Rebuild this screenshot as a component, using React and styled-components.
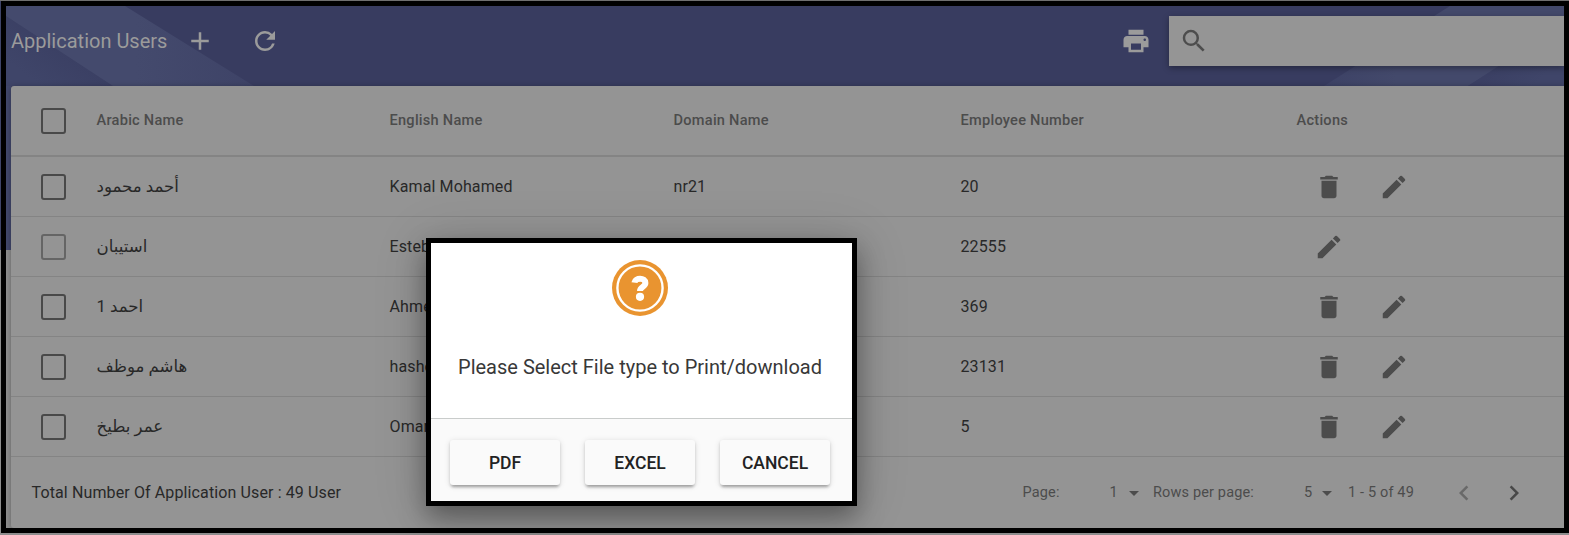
import React from "react";
import styled, { createGlobalStyle, css } from "styled-components";
import {
  MdAdd, MdRefresh, MdPrint, MdSearch, MdDelete, MdEdit,
  MdChevronLeft, MdChevronRight, MdArrowDropDown,
} from "react-icons/md";

const Global = createGlobalStyle`
  * { box-sizing: border-box; }
  body { margin: 0; background: #939393; font-family: Roboto, "Liberation Sans", sans-serif; }
`;
const Page = styled.div`
  position: relative;
  width: 1569px;
  height: 535px;
  overflow: hidden;
  padding: 1px 0 2px 1px;
  background: linear-gradient(#6f6f6f, #6f6f6f) 0 0 / 100% 1px no-repeat, linear-gradient(#3f4468, #3f4468) 0 0 / 1px 250px no-repeat, #8d8d8d;
`;
const Frame = styled.div`
  position: relative;
  display: flex;
  flex-direction: column;
  height: 532px;
  border: 5px solid #000;
  overflow: hidden;
  background: linear-gradient(#383c60 244px, #8d8d8d 244px);
`;
const Backdrop = styled.svg`
  position: absolute;
  top: 0;
  left: 0;
`;
const Toolbar = styled.header`
  position: relative;
  display: flex;
  align-items: center;
  height: 80px;
  padding: 0 0 10px 5px;
  color: #9b9b9b;
`;
const Title = styled.h1`
  margin: 0;
  width: 174px;
  font-size: 20px;
  font-weight: 400;
  white-space: nowrap;
`;
const IconButton = styled.button`
  display: grid;
  place-items: center;
  width: 30px;
  height: 30px;
  padding: 0;
  border: 0;
  background: none;
  color: ${(p) => p.$color || "inherit"};
  margin-left: ${(p) => p.$gap || 0}px;
  svg { width: 30px; height: 30px; display: block; }
`;
const Search = styled.div`
  display: flex;
  align-items: center;
  width: 395px;
  height: 50px;
  margin-left: 18px;
  padding-left: 10px;
  background: #959595;
  color: #4d4d4d;
  box-shadow: 0 2px 6px rgba(0, 0, 0, 0.35);
  svg { width: 30px; height: 30px; }
`;
const Card = styled.main`
  position: relative;
  margin-left: 5px;
  height: 442px;
  border-radius: 3px 0 0 3px;
  background: #949494;
  color: #282828;
  box-shadow: 0 1px 6px rgba(0, 0, 0, 0.3);
`;
const Row = styled.div`
  display: grid;
  grid-template-columns: 85.5px 293px 284px 287px 336px 1fr;
  align-items: center;
  height: 60px;
  border-bottom: 1px solid #848484;
  font-size: 16px;
  letter-spacing: 0.12px;
  ${(p) => p.$head && css`
    height: 71px;
    padding-bottom: 1px;
    border-bottom: 2px solid #848484;
    color: #4c4c4c;
    font-size: 14.6px;
    font-weight: 500;
    letter-spacing: 0.25px;
  `}
`;
const Check = styled.span`
  width: 25px;
  height: 26px;
  margin: 1px 0 0 30px;
  border: 2px solid ${(p) => (p.$off ? "#656565" : "#494949")};
  border-radius: 3px;
`;
const Arabic = styled.span`
  justify-self: start;
  font-family: Roboto, "DejaVu Sans", sans-serif;
  font-size: 16.6px;
  line-height: 24px;
  letter-spacing: 0;
`;
const Actions = styled.div`
  display: flex;
  gap: 35px;
  padding-left: 17.5px;
  color: #4c4c4c;
`;
const Footer = styled.footer`
  display: flex;
  align-items: center;
  height: 71px;
  padding-left: 20.5px;
`;
const Total = styled.div`
  width: 991px;
  font-size: 16px;
  letter-spacing: 0.12px;
`;
const Label = styled.span`
  width: ${(p) => p.$w}px;
  font-size: 14.5px;
  letter-spacing: 0.15px;
  color: #4c4c4c;
  white-space: nowrap;
`;
const Caret = styled(MdArrowDropDown)`
  flex: none;
  width: 24px;
  height: 24px;
  color: #4c4c4c;
  margin-right: ${(p) => p.$after}px;
`;
const Dialog = styled.div`
  position: absolute;
  left: 426px;
  top: 238px;
  width: 431px;
  height: 268px;
  display: flex;
  flex-direction: column;
  border: 5px solid #000;
  background: #fff;
  box-shadow: 0 12px 25px rgba(0, 0, 0, 0.35), 0 4px 50px rgba(0, 0, 0, 0.15);
`;
const DialogBody = styled.div`
  display: flex;
  flex-direction: column;
  align-items: center;
  height: 175px;
  padding: 17px 3px 0 0;
`;
const Message = styled.p`
  margin: 37px 0 0;
  font-size: 20px;
  line-height: 24px;
  color: #383838;
  white-space: nowrap;
`;
const DialogFooter = styled.div`
  flex: 1;
  display: flex;
  gap: 25px;
  padding: 21px 0 0 19px;
  border-top: 1px solid #c9cccb;
  background: #fafafa;
`;
const Choice = styled.button`
  width: 110px;
  height: 45px;
  padding: 0;
  border: 0;
  border-radius: 3px;
  background: #fafafa;
  color: #222;
  font: 500 17.5px Roboto, sans-serif;
  box-shadow: 0 4px 3px -2px rgba(0, 0, 0, 0.2), 0 2px 3px rgba(0, 0, 0, 0.14), 0 1px 6px rgba(0, 0, 0, 0.12);
`;

const users = [
  ["أحمد محمود", "Kamal Mohamed", "nr21", "20"],
  ["استيبان", "Esteban", "", "22555"],
  ["احمد 1", "Ahmed", "", "369"],
  ["هاشم موظف", "hashem", "", "23131"],
  ["عمر بطيخ", "Omar", "", "5"],
];

export default function App() {
  return (
    <Page>
      <Global />
      <Frame>
        <Backdrop width="1558" height="244" aria-hidden="true">
          <defs>
            <linearGradient id="fold" gradientUnits="userSpaceOnUse" x1="60" y1="46" x2="35" y2="80">
              <stop offset="0" stopColor="#3b4064" />
              <stop offset="1" stopColor="#3f4569" />
            </linearGradient>
            <linearGradient id="band" gradientUnits="userSpaceOnUse" x1="130" y1="80" x2="250" y2="80">
              <stop offset="0" stopColor="#444a6d" />
              <stop offset="1" stopColor="#3e4367" />
            </linearGradient>
            <linearGradient id="bandRight" gradientUnits="userSpaceOnUse" x1="1318" y1="80" x2="1390" y2="80">
              <stop offset="0" stopColor="#3d4266" />
              <stop offset="1" stopColor="#43496b" />
            </linearGradient>
            <linearGradient id="foldRight" gradientUnits="userSpaceOnUse" x1="1490" y1="62" x2="1515" y2="90">
              <stop offset="0" stopColor="#3b4064" />
              <stop offset="1" stopColor="#3f4569" />
            </linearGradient>
          </defs>
          <path d="M0 10 107 80H0Z" fill="url(#fold)" />
          <path d="M0 0H119L248 80H107L0 10Z" fill="url(#band)" />
          <path d="M1444 0H1558V20L1462 80H1318Z" fill="url(#bandRight)" />
          <path d="M1558 17V80H1462Z" fill="url(#foldRight)" />
          <path d="M0 80H5V244H0Z" fill="#42486c" />
        </Backdrop>
        <Toolbar>
          <Title>Application Users</Title>
          <IconButton aria-label="Add"><MdAdd /></IconButton>
          <IconButton aria-label="Refresh" $gap={35}><MdRefresh /></IconButton>
          <IconButton aria-label="Print" $gap={841}><MdPrint /></IconButton>
          <Search><MdSearch /></Search>
        </Toolbar>
        <Card>
          <Row $head>
            <Check />
            <span>Arabic Name</span>
            <span>English Name</span>
            <span>Domain Name</span>
            <span>Employee Number</span>
            <span>Actions</span>
          </Row>
          {users.map(([arabic, english, domain, number], i) => (
            <Row key={number}>
              <Check $off={i === 1} />
              <Arabic dir="rtl">{arabic}</Arabic>
              <span>{english}</span>
              <span>{domain}</span>
              <span>{number}</span>
              <Actions>
                {i !== 1 && <IconButton aria-label="Delete"><MdDelete /></IconButton>}
                <IconButton aria-label="Edit"><MdEdit /></IconButton>
              </Actions>
            </Row>
          ))}
          <Footer>
            <Total>Total Number Of Application User : 49 User</Total>
            <Label $w={87}>Page:</Label>
            <Label $w={12}>1</Label>
            <Caret $after={7.5} />
            <Label $w={151}>Rows per page:</Label>
            <Label $w={11}>5</Label>
            <Caret $after={9} />
            <Label $w={101}>1 - 5 of 49</Label>
            <IconButton aria-label="Previous page" $color="#696969"><MdChevronLeft /></IconButton>
            <IconButton aria-label="Next page" $gap={20} $color="#484848"><MdChevronRight /></IconButton>
          </Footer>
        </Card>
      </Frame>
      <Dialog role="dialog">
        <DialogBody>
          <svg width="58" height="58" viewBox="0 0 58 58" aria-hidden="true">
            <circle cx="29" cy="28" r="28" fill="#e99430" />
            <circle cx="29" cy="28" r="22.6" fill="none" stroke="#fff" strokeWidth="2.4" />
            <path d="M23.4 22.6C24 17.6 34.4 17.2 34.4 23C34.4 27 29 26.8 29 31" fill="none" stroke="#fff" strokeWidth="6" />
            <circle cx="29" cy="36.8" r="4.1" fill="#fff" />
          </svg>
          <Message>Please Select File type to Print/download</Message>
        </DialogBody>
        <DialogFooter>
          <Choice>PDF</Choice>
          <Choice>EXCEL</Choice>
          <Choice>CANCEL</Choice>
        </DialogFooter>
      </Dialog>
    </Page>
  );
}
